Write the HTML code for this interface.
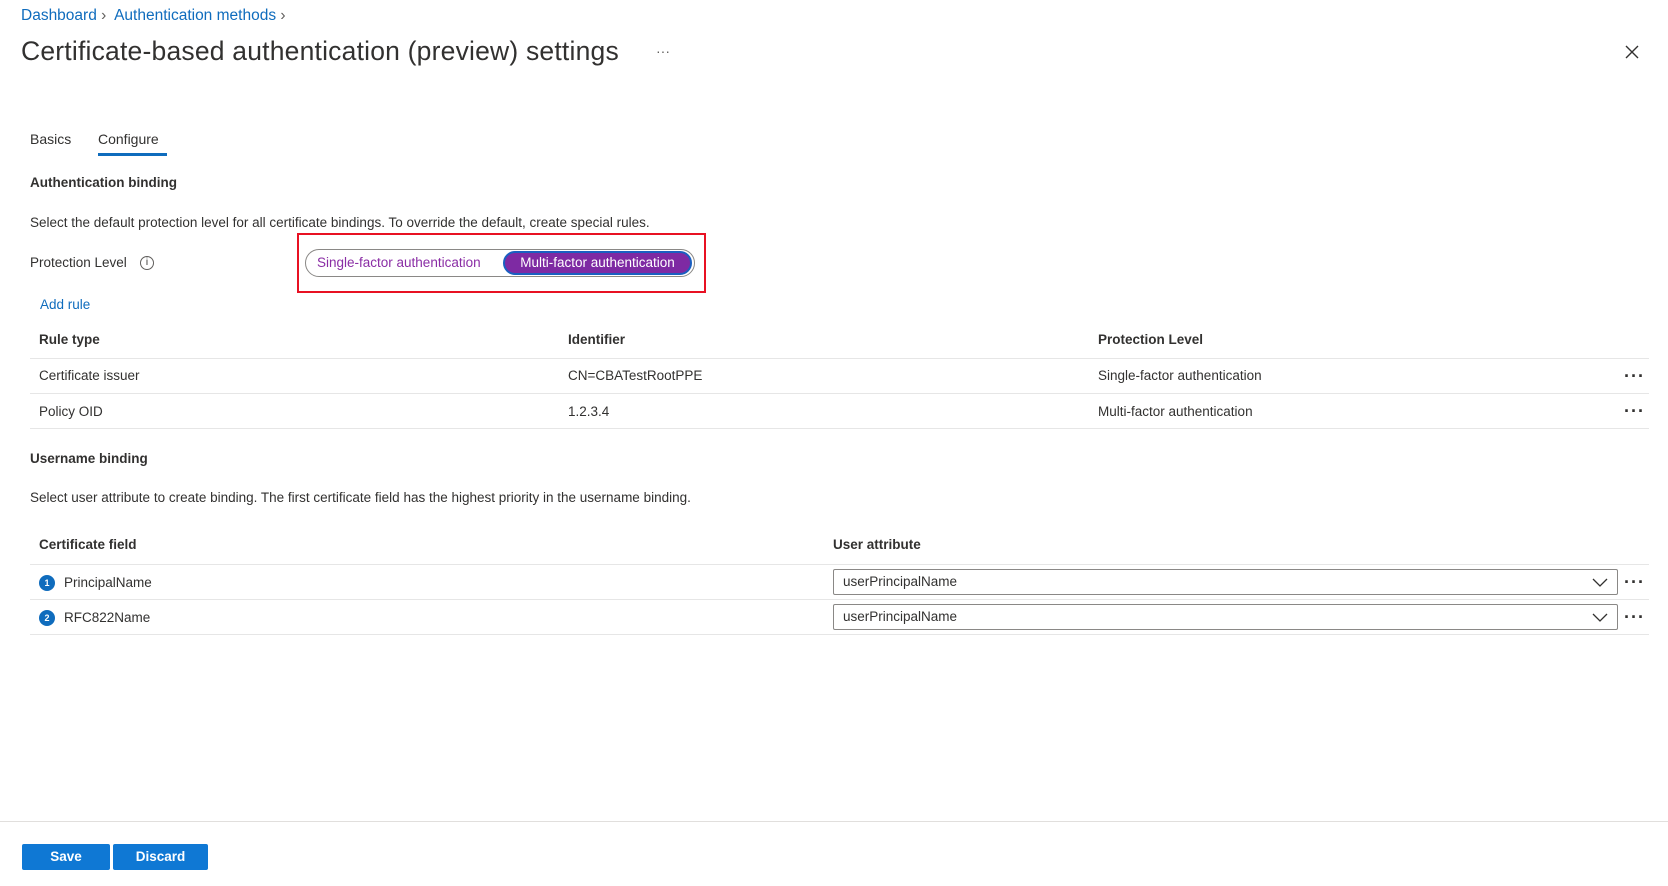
<!DOCTYPE html>
<html><head><meta charset="utf-8"><style>
*{margin:0;padding:0;box-sizing:border-box}
body{width:1668px;height:886px;background:#fff;font-family:"Liberation Sans",sans-serif;color:#323130;position:relative;overflow:hidden;font-size:13.5px}
.a{position:absolute;white-space:nowrap}
.link{color:#0f6cbd}
.line{position:absolute;height:1px;background:#e6e6e6}
.dots{position:absolute;font-size:18px;font-weight:bold;letter-spacing:1px;color:#323130}
.dd{position:absolute;left:833px;width:785px;height:26px;border:1px solid #8a8886;border-radius:2px;padding-left:9px;line-height:24px}
.num{position:absolute;left:39px;width:16px;height:16px;border-radius:50%;background:#0f6cbd;color:#fff;font-size:9px;font-weight:bold;text-align:center;line-height:16px}
.btn{position:absolute;top:844px;height:26px;background:#0f78d4;color:#fff;font-weight:bold;font-size:13.5px;text-align:center;line-height:26px;border-radius:2px}
</style></head><body>
<div class="a link" style="left:21px;top:7px;font-size:15.5px">Dashboard <span style="color:#605e5c">&#8250;</span>&nbsp; Authentication methods <span style="color:#605e5c">&#8250;</span></div>
<div class="a" style="left:21px;top:36px;font-size:26.5px;font-weight:500;color:#323130;letter-spacing:0.2px">Certificate-based authentication (preview) settings</div>
<div class="a" style="left:656px;top:43px;font-size:14px;color:#605e5c">···</div>
<svg class="a" style="left:1624px;top:44px" width="16" height="16"><path d="M2 2L14 14M14 2L2 14" stroke="#323130" stroke-width="1.4"/></svg>
<div class="a" style="left:30px;top:131px;font-size:14px">Basics</div>
<div class="a" style="left:98px;top:131px;font-size:14px">Configure</div>
<div style="position:absolute;left:98px;top:153px;width:69px;height:3px;background:#0f6cbd"></div>
<div class="a" style="left:30px;top:175px;font-weight:bold">Authentication binding</div>
<div class="a" style="left:30px;top:215px">Select the default protection level for all certificate bindings. To override the default, create special rules.</div>
<div class="a" style="left:30px;top:255px">Protection Level</div>
<div class="a" style="left:140px;top:256px;width:14px;height:14px;border:1px solid #605e5c;border-radius:50%;font-size:10px;text-align:center;line-height:12px">i</div>
<div style="position:absolute;left:297px;top:233px;width:409px;height:60px;border:2px solid #e81123"></div>
<div style="position:absolute;left:305px;top:249px;width:390px;height:28px;border:1px solid #8a8886;border-radius:14px"></div>
<div class="a" style="left:317px;top:255px;color:#8a2da5">Single-factor authentication</div>
<div style="position:absolute;left:503px;top:251px;width:189px;height:24px;border-radius:12px;background:#7e2aa3;border:2px solid #1a5fc0;color:#fff;text-align:center;line-height:20px">Multi-factor authentication</div>
<div class="a link" style="left:40px;top:297px">Add rule</div>
<div class="a" style="left:39px;top:332px;font-weight:bold">Rule type</div>
<div class="a" style="left:568px;top:332px;font-weight:bold">Identifier</div>
<div class="a" style="left:1098px;top:332px;font-weight:bold">Protection Level</div>
<div class="line" style="left:30px;width:1619px;top:358px"></div>
<div class="a" style="left:39px;top:368px">Certificate issuer</div>
<div class="a" style="left:568px;top:368px">CN=CBATestRootPPE</div>
<div class="a" style="left:1098px;top:368px">Single-factor authentication</div>
<div class="dots" style="left:1624px;top:366px">···</div>
<div class="line" style="left:30px;width:1619px;top:393px"></div>
<div class="a" style="left:39px;top:404px">Policy OID</div>
<div class="a" style="left:568px;top:404px">1.2.3.4</div>
<div class="a" style="left:1098px;top:404px">Multi-factor authentication</div>
<div class="dots" style="left:1624px;top:401px">···</div>
<div class="line" style="left:30px;width:1619px;top:428px"></div>
<div class="a" style="left:30px;top:451px;font-weight:bold">Username binding</div>
<div class="a" style="left:30px;top:490px">Select user attribute to create binding. The first certificate field has the highest priority in the username binding.</div>
<div class="a" style="left:39px;top:537px;font-weight:bold">Certificate field</div>
<div class="a" style="left:833px;top:537px;font-weight:bold">User attribute</div>
<div class="line" style="left:30px;width:1619px;top:564px"></div>
<div class="num" style="top:575px">1</div>
<div class="a" style="left:64px;top:575px">PrincipalName</div>
<div class="dd" style="top:569px">userPrincipalName</div>
<svg class="a" style="left:1592px;top:576px" width="16" height="12"><path d="M1 3L8 10L15 3" stroke="#323130" stroke-width="1.3" fill="none"/></svg>
<div class="dots" style="left:1624px;top:572px">···</div>
<div class="line" style="left:30px;width:1619px;top:599px"></div>
<div class="num" style="top:610px">2</div>
<div class="a" style="left:64px;top:610px">RFC822Name</div>
<div class="dd" style="top:604px">userPrincipalName</div>
<svg class="a" style="left:1592px;top:611px" width="16" height="12"><path d="M1 3L8 10L15 3" stroke="#323130" stroke-width="1.3" fill="none"/></svg>
<div class="dots" style="left:1624px;top:607px">···</div>
<div class="line" style="left:30px;width:1619px;top:634px"></div>
<div class="line" style="left:0;width:1668px;top:821px;background:#e1dfdd"></div>
<div class="btn" style="left:22px;width:88px">Save</div>
<div class="btn" style="left:113px;width:95px">Discard</div>
</body></html>
